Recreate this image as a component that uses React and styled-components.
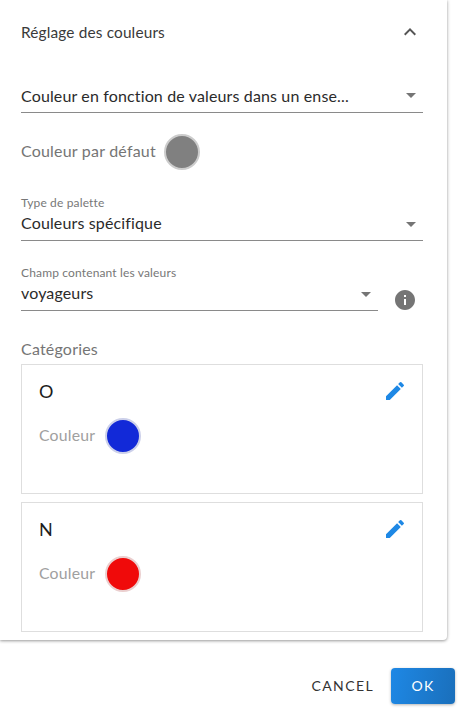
import React from "react";
import styled, { createGlobalStyle } from "styled-components";

const Global = createGlobalStyle`
  html, body { margin: 0; padding: 0; background: #fff; }
  body { font-family: "Lato", "Open Sans", sans-serif; width: 460px; height: 711px; overflow: hidden; }
  * { box-sizing: border-box; }
`;
const Page = styled.div`
  width: 460px; height: 711px; display: flex; flex-direction: column; background: #fff;
`;
const Panel = styled.section`
  width: 447px; height: 640px; padding: 0 24px 0 21px; background: #fff; display: flex; flex-direction: column;
  border-bottom-right-radius: 4px;
  box-shadow: 0 1px 3px rgba(0,0,0,.35), 0 0 5px rgba(0,0,0,.1);
`;
const Header = styled.div`
  height: 64px; display: flex; align-items: center; justify-content: space-between; padding-right: 1px;
  font-size: 15.4px; color: #3a3a3a; letter-spacing: .15px; flex: none;
`;
const Field = styled.div`
  flex: ${p => p.$grow ? 1 : "none"};
  margin-top: ${p => p.$top || 0}px;
  min-width: 0;
`;
const Label = styled.div`
  font-size: 12px; line-height: 14px; color: #777; letter-spacing: .15px;
`;
const Select = styled.div`
  height: ${p => p.$h}px; display: flex; align-items: center; justify-content: space-between;
  border-bottom: 1px solid #8a8a8a; padding: ${p => p.$pad || "0 7px 2px 0"}; font-size: 16px; color: #2b2b2b; letter-spacing: .14px;
`;
const Value = styled.span`
  margin-bottom: ${p => p.$lift}px;
`;
const Caret = styled.span`
  width: 0; height: 0; border-left: 5px solid transparent; border-right: 5px solid transparent;
  border-top: 5px solid #757575; flex: none;
`;
const ColorRow = styled.div`
  display: flex; align-items: center; gap: ${p => p.$gap}px; margin-top: ${p => p.$top}px;
  font-size: ${p => p.$size}px; color: ${p => p.$color}; letter-spacing: .2px;
`;
const Dot = styled.span`
  width: 36px; height: 36px; border-radius: 50%; flex: none; background: ${p => p.$color};
  border: 2px solid ${p => p.$ring};
`;
const FieldRow = styled.div`
  display: flex; align-items: flex-end; margin-top: 25px;
`;
const InfoWrap = styled.span`
  width: 45px; flex: none; display: flex; justify-content: flex-end; padding-right: 6px; margin-bottom: -1px;
`;
const Section = styled.div`
  font-size: 16px; line-height: 18px; color: #757575; letter-spacing: .2px; margin-top: 29px; height: 24px;
`;
const Cards = styled.div`
  display: flex; flex-direction: column; gap: 8px;
`;
const Card = styled.article`
  height: 130px; border: 1px solid #dedede; padding: 14px 15px 0 17px;
`;
const CardHead = styled.div`
  display: flex; align-items: center; justify-content: space-between; height: 24px; font-size: 18px; color: #1c1c1c;
`;
const Footer = styled.footer`
  flex: 1; display: flex; align-items: flex-start; justify-content: flex-end; gap: 17px; padding: 28px 5px 0 0;
`;
const TextButton = styled.button`
  height: 36px; border: 0; background: none; padding: 0 0 2px; font: inherit; font-size: 14px; letter-spacing: 1.4px; color: #333;
`;
const PrimaryButton = styled.button`
  width: 64px; height: 36px; border: 0; border-radius: 4px; padding: 0 0 2px; color: #fff; font: inherit; font-size: 14px; letter-spacing: 1.25px;
  background: linear-gradient(100deg, #1e88e5, #1a6fbb);
  box-shadow: 0 1px 3px rgba(0,0,0,.3);
`;

const Chevron = () => (
  <svg width="24" height="24" viewBox="0 0 24 24" fill="#555"><path d="M12 8l-6 6 1.41 1.41L12 10.83l4.59 4.58L18 14z"/></svg>
);
const Info = () => (
  <svg width="24" height="24" viewBox="0 0 24 24" fill="#757575"><path d="M12 2C6.48 2 2 6.48 2 12s4.48 10 10 10 10-4.48 10-10S17.52 2 12 2zm1 15h-2v-6h2v6zm0-8h-2V7h2v2z"/></svg>
);
const Pencil = () => (
  <svg width="24" height="24" viewBox="0 0 24 24" fill="#1e88e5"><path d="M3 17.25V21h3.75L17.81 9.94l-3.75-3.75L3 17.25zM20.71 7.04a1 1 0 0 0 0-1.41l-2.34-2.34a1 1 0 0 0-1.41 0l-1.83 1.83 3.75 3.75 1.83-1.83z"/></svg>
);

const categories = [
  { name: "O", color: "#1229d8", ring: "#ccd0ea" },
  { name: "N", color: "#f00a0a", ring: "#ebcfcf" },
];

export default function App() {
  return (
    <Page>
      <Global />
      <Panel>
        <Header>Réglage des couleurs<Chevron /></Header>
        <Select $h={49} $pad="15px 7px 0 0"><Value $lift={1}>Couleur en fonction de valeurs dans un ense...</Value><Caret /></Select>
        <ColorRow $gap={8} $top={21} $size={16} $color="#757575"><Value $lift={3}>Couleur par défaut</Value><Dot $color="#808080" $ring="#ccc" /></ColorRow>
        <Field $top={26}>
          <Label>Type de palette</Label>
          <Select $h={31}><Value $lift={3}>Couleurs spécifique</Value><Caret /></Select>
        </Field>
        <FieldRow>
          <Field $grow>
            <Label>Champ contenant les valeurs</Label>
            <Select $h={31}><Value $lift={3}>voyageurs</Value><Caret /></Select>
          </Field>
          <InfoWrap><Info /></InfoWrap>
        </FieldRow>
        <Section>Catégories</Section>
        <Cards>
          {categories.map(c => (
            <Card key={c.name}>
              <CardHead>{c.name}<Pencil /></CardHead>
              <ColorRow $gap={10} $top={15} $size={15.8} $color="#a0a0a0"><Value $lift={3}>Couleur</Value><Dot $color={c.color} $ring={c.ring} /></ColorRow>
            </Card>
          ))}
        </Cards>
      </Panel>
      <Footer>
        <TextButton>CANCEL</TextButton>
        <PrimaryButton>OK</PrimaryButton>
      </Footer>
    </Page>
  );
}
